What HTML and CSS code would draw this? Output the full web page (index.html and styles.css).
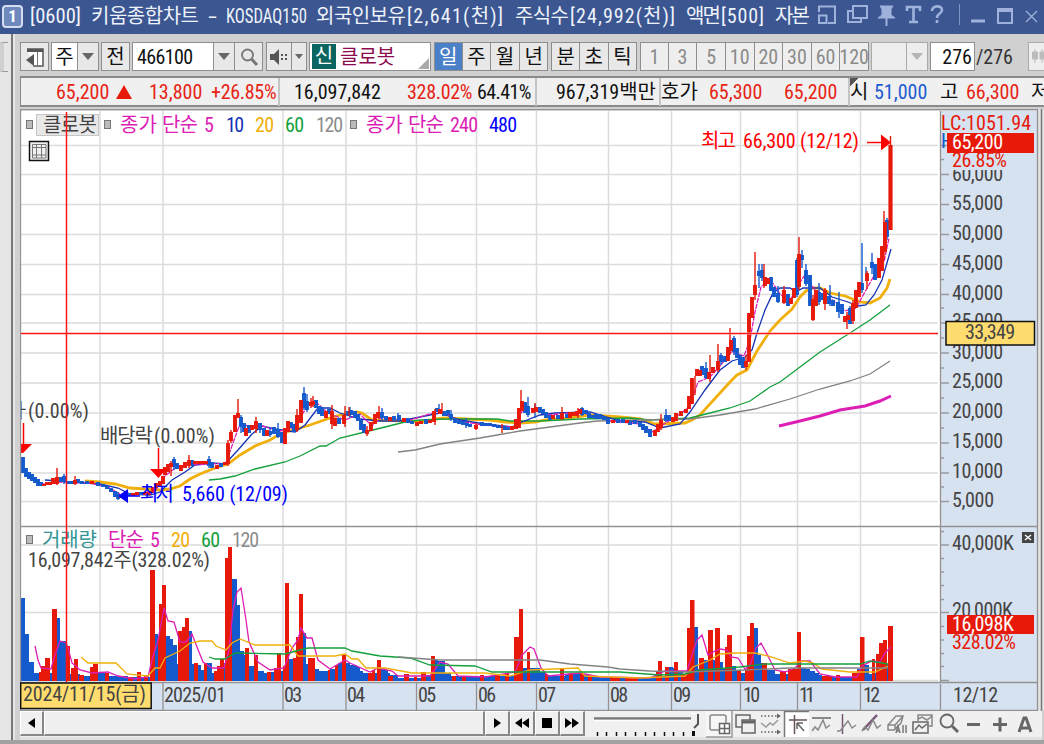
FILE: index.html
```
<!DOCTYPE html>
<html lang="ko">
<head>
    <meta charset="UTF-8">
    <meta name="viewport" content="width=device-width, initial-scale=1.0">
    <title>키움종합차트</title>
    <link rel="stylesheet" href="styles.css">
</head>
<body>

<header class="titlebar">
    <span class="win-no">1</span>
    <svg class="title" width="786" height="34">
        <text x="5" y="23" textLength="51" lengthAdjust="spacingAndGlyphs">[0600]</text>
        <text x="66" y="23" textLength="108">키움종합차트</text>
        <text x="183" y="23" textLength="9" lengthAdjust="spacingAndGlyphs">-</text>
        <text x="201" y="23" textLength="81" lengthAdjust="spacingAndGlyphs">KOSDAQ150</text>
        <text x="291" y="23" textLength="90">외국인보유</text>
        <text x="382" y="23" textLength="96">[2,641(천)]</text>
        <text x="490" y="23" textLength="54">주식수</text>
        <text x="545" y="23" textLength="105">[24,992(천)]</text>
        <text x="661" y="23" textLength="35">액면</text>
        <text x="696" y="23" textLength="43">[500]</text>
        <text x="750" y="23" textLength="35">자본</text>
    </svg>
    <svg class="win-icons" width="232" height="34" fill="none" stroke="#9fb2dc" stroke-width="2">
        <path d="M8 12V6.500H24V23H17M8 15.500H15.500V23H8Z"/>
        <path d="M42 11H37V22H50V19M42 6H56V18H42Z"/>
        <path d="M69 6H82L80 9V15L84 18H67L71 15V9Z" fill="#9fb2dc" stroke-width="1"/>
        <path d="M75.500 18V26"/>
        <path d="M96 11V7H109V11M102.500 7V22M98 22H107" stroke-width="2.600"/>
        <path d="M121 11C121 5 131 5 131 10C131 14 126 13 126 18M126 20V23" stroke-width="2.600"/>
        <path d="M148.500 4V25" stroke="#7f93c4" stroke-width="1"/>
        <path d="M160 21H174" stroke-width="3"/>
        <path d="M187 9H201V23H187ZM187 11H201"/>
        <path d="M215 11L226 22M226 11L215 22" stroke-width="1.300"/>
    </svg>
</header>

<div class="workspace">
    <aside class="dock"><i class="dock-tab"></i></aside>
    <main class="panel">

        <div class="toolbar">
            <span class="btn w29">
                <svg width="20" height="20"><path d="M2 2H18V19H8" fill="#fff" stroke="#555" stroke-width="1.500"/><path d="M2 3.500H18" stroke="#555" stroke-width="3"/><path d="M12.500 5V19" stroke="#777"/><path d="M9 7V19L1 13Z" fill="#555"/></svg>
            </span>
            <span class="group ml2">
                <span class="btn white w27">주</span><span class="btn w21"><i class="down"></i></span>
            </span>
            <span class="btn w29 ml2">전</span>
            <span class="group ml2">
                <span class="btn white code">466100</span>
                <span class="btn w21"><i class="down"></i></span>
                <span class="btn w28"><svg width="20" height="20" fill="none" stroke="#777" stroke-width="1.800"><circle cx="8.500" cy="8" r="5.500"/><path d="M12.500 12L18 18" stroke-width="3"/></svg></span>
            </span>
            <span class="group ml3">
                <span class="btn w26"><svg width="20" height="20" fill="#555"><path d="M1 7H5L10 2V18L5 13H1Z"/><path d="M12 7h2v2h-2zM12 11h2v2h-2zM16 7h2v2h-2zM16 11h2v2h-2z"/></svg></span><span class="btn w15"><i class="down small"></i></span>
            </span>
            <span class="btn white stock ml2"><b>신</b>클로봇<i class="corner"></i></span>
            <span class="group ml3 period">
                <span class="btn on">일</span><span class="btn">주</span><span class="btn">월</span><span class="btn">년</span>
            </span>
            <span class="group ml3 period">
                <span class="btn">분</span><span class="btn">초</span><span class="btn">틱</span>
            </span>
            <span class="group ml3 minutes">
                <span class="btn">1</span><span class="btn">3</span><span class="btn">5</span><span class="btn">10</span><span class="btn">20</span><span class="btn">30</span><span class="btn">60</span><span class="btn">120</span>
            </span>
            <span class="group ml2">
                <span class="btn pale w36"></span><span class="btn pale w21"><i class="down grey"></i></span>
            </span>
            <span class="btn white count ml2">276</span>
            <span class="total">/276</span>
            <span class="btn pale last"><svg width="16" height="24" fill="#bbb" stroke="#bbb"><path d="M6 4V18M13 4V18" /><path d="M3.500 7h5v7h-5zM11 7h5v7h-5z"/></svg></span>
        </div>

        <div class="quote">
            <span></span>
            <span class="up">65,200</span>
            <span class="up"><i class="tri"></i></span>
            <span class="up">13,800</span>
            <span class="up pct">+26.85%</span>
            <span class="rule vol">16,097,842</span>
            <span class="up pct">328.02%</span>
            <span class="tight">64.41%</span>
            <span class="rule amount">967,319백만</span>
            <span class="rule">호가</span>
            <span class="up">65,300</span>
            <span class="up">65,200</span>
            <span class="rule mark">시</span>
            <span class="down-price">51,000</span>
            <span>고</span>
            <span class="up">66,300</span>
            <span>저</span>
        </div>

        <svg class="chart" width="1024" height="602" viewBox="20 109 1024 602">
            <!-- backgrounds -->
            <rect x="20" y="109" width="1024" height="602" fill="#e4e4e4"/>
            <rect x="21" y="111" width="919" height="571" fill="#fff"/>
            <rect x="940" y="111" width="98" height="572" fill="#d7e2f0"/>
            <rect x="21" y="683" width="1017" height="28" fill="#d7e2f0"/>

            <!-- grid -->
            <path class="grid" d="M100 111V682M163 111V682M283 111V682M346 111V682M416.500 111V682M476.500 111V682M536.500 111V682M608.500 111V682M671.500 111V682M740.500 111V682M797.500 111V682M860.500 111V682"/>
            <path class="grid" d="M21 145.500H938M21 174.500H938M21 204.500H938M21 234.500H938M21 264.500H938M21 294.500H938M21 323H938M21 353H938M21 383H938M21 413H938M21 443H938M21 473H938M21 501.500H938M21 545H938M21 612.500H938M21 680.500H938"/>

            <!-- volume bars -->
            <path class="blue" d="M21 681V598H25V634H29V662H34V673H57V618H60V641H67V674H69V674H80V676H98V673H105V676H128V677H155V634H158V640H166V636H170V639H173V645H177V664H189V631H192V664H198V665H201V670H207V663H212V673H222V663H232V579H237V605H240V651H244V655H248V666H258V671H264V673H271V672H281V671H289V659H296V660H303V633H306V664H315V669H319V671H330V669H335V666H338V663H350V665H357V667H360V671H363V673H381V668H385V670H388V673H390V675H398V678H409V678H426V675H431V673H435V660H438V661H445V673H451V676H500V676H523V668H540V672H545V675H551V676H565V674H585V675H590V676H600V678H655V676H665V671H669V667H673V668H678V671H683V675H694V627H698V669H704V660H715V661H719V662H723V669H732V666H736V670H740V673H745V669H754V628H758V655H761V663H767V670H775V674H795V670H801V668H806V669H810V671H815V673H819V675H822V676H830V677H857V669H864V665H869V674H872V673H879V670H886V664H889V681Z"/>
            <path class="red" d="M39 672H41V666H45V658H50V681H39ZM52 609H57V681H52ZM66 646H70V681H66ZM71 668H74V659H78V681H71ZM79 675H84V681H79ZM90 667H93V664H98V681H90ZM105 673H109V681H105ZM128 677H133V681H128ZM137 672H141V681H137ZM144 676H148V681H144ZM150 570H155V681H150ZM158 637H159V604H162V585H166V681H158ZM178 631H182V627H185V618H189V681H178ZM194 663H198V681H194ZM204 663H207V681H204ZM214 671H217V666H220V659H224V681H214ZM225 558H228V547H232V681H225ZM245 648H249V681H245ZM254 655H258V681H254ZM267 672H271V681H267ZM274 668H277V653H281V681H274ZM283 666H285V583H289V681H283ZM293 658H296V637H299V594H303V681H293ZM308 658H315V681H308ZM328 670H330V681H328ZM335 665H338V681H335ZM342 655H346V681H342ZM368 673H372V670H375V681H368ZM377 660H381V681H377ZM388 676H393V681H388ZM404 674H409V681H404ZM414 677H417V681H414ZM421 672H426V681H421ZM431 656H435V681H431ZM452 676H456V681H452ZM462 677H466V681H462ZM480 675H484V681H480ZM495 674H500V681H495ZM505 673H509V681H505ZM514 637H519V609H523V681H514ZM527 652H530V681H527ZM545 674H548V681H545ZM560 668H564V681H560ZM569 673H573V681H569ZM580 673H584V681H580ZM588 675H592V681H588ZM610 678H620V681H610ZM625 678H638V681H625ZM656 672H658V661H662V681H656ZM665 667H669V681H665ZM674 662H678V681H674ZM681 674H687V628H690V600H694.500V681H681ZM699 658H704V681H699ZM708 630H713V681H708ZM715 628H720V681H715ZM725 647H727V635H732V681H725ZM737 671H741V681H737ZM745 669H747V636H750V623H754V681H745ZM762 663H767V681H762ZM780 671H786V681H780ZM788 669H797V632H801V681H788ZM822 676H832V681H822ZM836 675H840V681H836ZM852 673H857V670H860V637H864.500V681H852ZM872 659H875V681H872ZM876 654H879V643H883V640H887V681H876ZM888 626H893V681H888Z"/>

            <!-- volume averages -->
            <path class="ma5" d="M35 646L38 660L41 668L51 669L55 655L60 641L66 643L68 648L72 663L80 670L92 673L108 672L118 676L135 679L148 677L152 660L158 640L164 608L168 621L174 622L180 642L186 642L192 634L197 647L203 662L212 668L224 668L229 650L233 610L237 592L241 588L246 620L249 642L258 662L270 670L284 668L292 648L298 640L301 628L307 638L312 638L318 660L330 669L345 660L350 663L370 672L378 668L392 671L398 676L430 676L440 662L448 664L458 676L485 677L515 672L522 655L530 647L534 649L541 668L548 676L580 673L600 677L650 678L665 671L687 671L692 655L697 640L702 635L708 655L715 651L720 649L727 650L731 657L738 658L745 669L750 665L756 648L761 643L768 656L775 670L785 672L795 668L802 661H810L820 674L835 677H857L862 666L872 661L880 662L885 653L891 647"/>
            <path class="ma20" d="M81 657L88 663H116L127 674L148 676L155 668H160L165 658L180 651L190 643L200 641H212L216 646L226 650L232 643L240 639L255 645H290L298 656H335L345 654L352 659H358L366 668H385L412 673H485L510 676L530 670L578 668L585 676L640 678L685 676L693 667L710 660L720 654L735 653H755L768 656L790 663L805 661L813 663L822 669L850 672H875L888 666"/>
            <path class="ma60" d="M209 657L215 659H225L235 653L285 654L300 650L308 648H345L352 651L380 656L410 658L430 665L475 666L492 672H620L660 675L685 674L700 670L740 667L765 664H860L870 661L888 664"/>
            <path class="ma120" d="M398 657L440 660H540L570 664L608 667L620 669L650 671L685 672L745 670L790 668H888"/>

            <!-- price averages -->
            <path class="ma20 thick" d="M85 481L100 482L115 484L130 488L145 489L160 490L170 489L180 486L190 479L200 474L215 468L228 464L240 455L255 446L270 440L280 434L300 428L310 425L330 418L340 415L357 412L362 413L372 420L410 421L425 422L435 419L445 418L465 419L490 420L505 422L520 423L535 422L545 420L560 419L590 415L620 417L640 419L655 424L685 423L692 420L700 415L730 382L737 375L747 370L757 351L770 331L780 320L792 309L800 297L806 291L813 288H820L830 293L845 296L860 302L870 303L880 298L887 288L890 279"/>
            <path class="ma60" d="M209 480L220 479L235 476L255 469L285 462L300 456L320 446H326L340 438L365 432L385 427L405 422L420 420L445 419H497L510 421H540L580 419L630 418L650 420L690 418L710 413L730 408L750 401L770 387L780 382L800 367L820 352L850 333L870 320L890 305"/>
            <path class="ma120" d="M398 452L415 450L440 444L480 438L520 431L550 427L580 423L597 421L640 420L690 419L720 415L755 409L790 399L820 389L850 381L870 374L890 361"/>
            <path class="ma240" d="M779 426L800 421L820 416L840 410L865 406L880 401L891 396"/>
            <path class="ma10" d="M45 480L70 482L100 484L118 488L130 494L150 495L160 492L172 480L185 472L195 465L212 463L225 464L238 450L252 434L262 426L275 429L295 432L305 425L318 408H330L340 413L360 419L380 421H400L440 413L460 420L485 424L512 427L522 422L540 415L555 413L590 412L620 421L645 422L660 428L680 424L690 412L705 390L720 370L732 361L745 357L752 350L757 333L765 310L773 293L780 288H790L796 292L803 288H820L832 297L848 302L858 306L866 305L874 295L882 280L891 249"/>
            <path class="ma5 dash" d="M30 476L42 484L60 482L90 483L108 487L120 494L135 495L155 491L165 476L178 466L190 465L212 464L226 463L234 440L240 424L248 426L262 426L280 431L292 428L300 418L308 405L318 404L328 413L345 420L360 414L372 426L380 418L410 420L440 411L460 421L482 425L515 427L522 411L530 408L548 415L580 412L610 421L640 424L652 432L664 424L680 414L690 406L698 382L710 377L720 366L731 352L744 356L750 340L755 312L761 287L770 279L780 294L790 301L798 285L805 275L815 290L830 298L845 311L856 308L866 290L876 272L884 262L889 238"/>

            <!-- candles: bodies and wicks -->
            <path class="body blue-line" d="M23 457V473M26 468V477M29 472V479M32 474V481M35 477V483M38 479V486M41 482V486M61 477V482M64 476V482M69 481V484M72 481V484M78 479V483M82 481V484M87 481V484M98 482V486M103 484V487M107 486V489M111 488V492M115 491V497M118 494V499M129 493V496M141 492V495M174 459V467M177 463V469M192 460V466M209 459V466M212 462V468M221 463V467M241 417V427M244 423V432M249 425V433M260 423V430M264 428V436M270 431V435M274 427V434M278 429V437M282 432V443M291 422V428M294 424V432M304 393V408M307 401V410M316 400V408M319 406V414M322 407V416M329 409V414M339 418V424M348 411V415M351 410V415M355 411V418M358 414V421M361 420V430M364 424V433M382 412V418M386 416V420M394 416V420M399 415V420M408 418V423M412 421V424M426 419V424M437 408V412M444 411V416M448 410V415M451 414V419M455 418V423M459 420V424M463 421V425M467 423V426M470 424V427M482 422V426M486 423V426M490 423V426M494 424V427M498 425V428M502 426V428M505 426V430M508 427V430M525 402V413M528 406V415M540 407V413M543 409V414M546 412V418M550 415V420M558 415V419M567 414V418M582 408V415M586 410V414M589 413V418M592 415V418M596 414V419M600 414V419M604 416V420M608 418V424M618 419V423M623 419V423M630 421V425M635 420V424M640 422V427M643 424V430M646 426V433M650 429V437M666 415V421M669 415V421M702 366V375M706 368V378M721 355V362M725 356V362M734 338V352M737 348V358M740 355V365M743 358V368M759 271V276M762 270V278M771 277V291M774 287V297M778 293V302M788 294V306M797 260V295M802 255V260M806 270V284M810 275V306M819 292V302M823 293V300M829 296V304M833 300V306M838 302V312M842 304V314M850 308V324M862 283V290M872 262V268M875 264V280M887 220V237"/>
            <path class="wick blue-line" d="M64 474V484M118 492V500M174 457V470M209 456V468M241 415V433M260 423V433M278 423V438M270 427V437M304 387V410M307 394V412M350 407V418M382 408V420M398 413V421M439 404V414M451 410V421M466 418V428M528 397V417M535 404V418M582 407V416M666 409V422M706 362V379M721 353V365M734 336V355M759 264V288M762 264V281M778 286V303M797 258V297M802 250V268M806 264V286M819 283V305M830 285V306M839 292V318M850 306V324M862 243V293M872 253V274M866 267V277M887 218V240"/>
            <path class="body red-line" d="M44 484V486M47 482V485M50 482V485M53 478V484M57 477V484M75 480V484M92 481V484M121 495V498M125 493V496M133 493V496M137 492V495M145 492V495M149 491V495M153 487V493M156 483V488M160 481V486M163 476V484M165 467V475M168 464V472M171 463V467M181 465V471M185 462V468M189 460V466M195 461V464M199 461V464M203 461V464M206 461V464M217 465V469M225 462V465M228 443V464M231 432V441M235 415V432M238 413V418M246 428V436M252 425V430M256 421V429M267 430V436M285 428V444M288 421V432M297 415V430M301 400V423M311 402V406M313 401V405M326 411V418M332 411V424M335 418V426M344 415V424M367 430V434M371 422V431M375 414V424M378 412V418M390 417V421M404 418V422M417 422V426M421 421V424M430 420V423M434 411V422M440 409V414M476 425V429M512 426V430M516 419V429M519 408V428M522 401V411M533 408V413M536 407V412M553 415V419M562 413V419M570 412V418M573 412V416M577 411V416M580 409V414M613 420V423M627 420V423M655 430V436M658 424V432M661 420V428M673 417V422M676 413V421M681 411V416M686 409V413M689 396V409M692 378V404M697 369V376M700 370V376M709 372V379M713 367V373M718 361V370M728 347V361M731 340V351M746 361V367M749 313V362M752 297V318M755 285V295M765 277V286M768 278V284M784 290V303M791 298V304M794 288V298M799 254V287M813 299V320M816 290V306M825 290V304M845 316V322M848 315V320M853 303V321M856 290V308M859 282V297M867 273V281M879 258V278M882 246V271M885 222V252"/>
            <path class="wick red-line" d="M57 468V485M75 476V485M171 461V476M189 455V468M228 440V466M231 430V443M238 399V416M256 417V433M297 409V432M313 396V407M311 398V408M332 405V429M345 406V427M349 407V416M367 426V436M379 406V419M435 409V425M442 403V414M476 423V430M502 424V433M521 390V411M535 403V412M562 407V420M578 408V418M661 414V430M695 376V395M710 355V382M718 344V372M730 328V355M746 355V370M755 252V300M764 264V288M784 286V304M799 237V290M813 295V321M825 288V310M847 312V329M853 300V324M867 271V289M884 211V260"/>
            <path class="red-line" stroke-width="4.200" d="M890.500 145V230"/>
            <path class="wick red-line" d="M890.500 136V146"/>

            <!-- chart labels -->
            <rect x="36.500" y="114.500" width="62" height="21" fill="#e8e8e8" stroke="#c6c6c6"/>
            <g fill="#bbb" stroke="#777"><rect x="26.500" y="120.500" width="6" height="8"/><rect x="104.500" y="120.500" width="6" height="8"/><rect x="350.500" y="120.500" width="6" height="8"/><rect x="26.500" y="535.500" width="6" height="8"/></g>
            <text x="43" y="132" textLength="54" fill="#444">클로봇</text>
            <g fill="#dc1eb4">
                <text x="120" y="132" textLength="37">종가</text><text x="162" y="132" textLength="36">단순</text><text x="204" y="132">5</text>
                <text x="366" y="132" textLength="37">종가</text><text x="408" y="132" textLength="36">단순</text><text x="450" y="132" textLength="28">240</text>
                <text x="108" y="547" textLength="36">단순</text><text x="150" y="547">5</text>
            </g>
            <text x="226" y="132" textLength="18" fill="#1432b4">10</text>
            <text x="255" y="132" textLength="19" fill="#f0af0a">20</text>
            <text x="285" y="132" textLength="19" fill="#14a03c">60</text>
            <text x="316" y="132" textLength="27" fill="#8c8c8c">120</text>
            <text x="489" y="132" textLength="28" fill="#00f">480</text>
            <text x="42" y="547" textLength="55" fill="#329696">거래량</text>
            <text x="171" y="547" textLength="19" fill="#f0af0a">20</text>
            <text x="201" y="547" textLength="19" fill="#14a03c">60</text>
            <text x="232" y="547" textLength="27" fill="#8c8c8c">120</text>
            <text x="28" y="567" textLength="182" fill="#444">16,097,842주(328.02%)</text>

            <rect x="29.500" y="141.500" width="19" height="19" fill="#f0f0f0" stroke="#111" stroke-width="1.500"/>
            <path d="M32.500 144.500H46V158H32.500ZM32.500 147.500H46M32.500 155H46M36.500 144V158M41.500 144V158" fill="none" stroke="#777"/>

            <g fill="#444">
                <text x="12" y="418">ㅏ</text>
                <text x="28" y="418" textLength="61">(0.00%)</text>
                <text x="100" y="443" textLength="53">배당락</text><text x="154" y="443" textLength="61">(0.00%)</text>
            </g>
            <path d="M23.500 423V445M158.500 448V470" stroke="#f00" stroke-width="1.500"/>
            <path d="M21 444H32L23 453H21ZM150 469H166L158.500 478Z" fill="#f00"/>
            <path d="M118 496L128 489V503Z" fill="#00f"/>
            <path d="M126 496H140" stroke="#00f" stroke-width="1.500"/>
            <g fill="#00f"><text x="140" y="501" textLength="34">최저</text><text x="182" y="501" textLength="106">5,660 (12/09)</text></g>
            <g fill="#f00"><text x="701" y="148" textLength="35">최고</text><text x="743" y="148" textLength="116">66,300 (12/12)</text></g>
            <path d="M867 142.500H883" stroke="#f00" stroke-width="1.500"/>
            <path d="M881 134.500L891 142.500L881 150.500Z" fill="#f00"/>

            <!-- frames -->
            <path class="frame" d="M20 109.500H1038M20.500 109V711M940.500 111V682M1037.500 109V711M20 526.500H1037M20 682.500H1037M20 710.500H1037M163 683V710M283 683V710M346 683V710M416.500 683V710M476.500 683V710M536.500 683V710M608.500 683V710M671.500 683V710M740.500 683V710M797.500 683V710M860.500 683V710M940.500 684V710"/>
            <path d="M1041.500 109V711" stroke="#777" stroke-width="1.500"/>
            <path class="tick" d="M941 145.500H949M941 174.500H949M941 204.500H949M941 234.500H949M941 264.500H949M941 294.500H949M941 323H949M941 353H949M941 383H949M941 413H949M941 443H949M941 473H949M941 501.500H949M941 545H949M941 612.500H949M941 680.500H949M941 159.500H944M941 189.500H944M941 219.500H944M941 249.500H944M941 279.500H944M941 308H944M941 338H944M941 368H944M941 398H944M941 428H944M941 458H944M941 487H944M941 531.500H944M941 558.500H944M941 572H944M941 585.500H944M941 599.500H944M941 626.500H944M941 640H944M941 653.500H944M941 666.500H944"/>

            <!-- scales -->
            <g fill="#444">
                <text x="952" y="181" textLength="51">60,000</text>
                <text x="952" y="210" textLength="51">55,000</text>
                <text x="952" y="240" textLength="51">50,000</text>
                <text x="952" y="270" textLength="51">45,000</text>
                <text x="952" y="300" textLength="51">40,000</text>
                <text x="952" y="328" textLength="51">35,000</text>
                <text x="952" y="359" textLength="51">30,000</text>
                <text x="952" y="388" textLength="51">25,000</text>
                <text x="952" y="418" textLength="51">20,000</text>
                <text x="952" y="448" textLength="51">15,000</text>
                <text x="952" y="478" textLength="51">10,000</text>
                <text x="952" y="507" textLength="42">5,000</text>
                <text x="952" y="550" textLength="62">40,000K</text>
                <text x="952" y="617" textLength="61">20,000K</text>
                <text x="164" y="702" textLength="62">2025/01</text>
                <text x="284" y="702" textLength="18">03</text>
                <text x="347" y="702" textLength="18">04</text>
                <text x="418" y="702" textLength="18">05</text>
                <text x="478" y="702" textLength="18">06</text>
                <text x="538" y="702" textLength="18">07</text>
                <text x="610" y="702" textLength="18">08</text>
                <text x="673" y="702" textLength="18">09</text>
                <text x="743" y="702" textLength="17">10</text>
                <text x="799" y="702" textLength="16">11</text>
                <text x="863" y="702" textLength="17">12</text>
                <text x="953" y="702" textLength="45">12/12</text>
            </g>
            <rect x="950" y="152" width="75" height="18" fill="#d7e2f0"/>
            <text x="941" y="130" textLength="90" fill="#e6190a">LC:1051.94</text>
            <text x="941" y="148" fill="#145acd">H</text>
            <text x="952" y="167" textLength="55" fill="#e6190a">26.85%</text>
            <rect x="947" y="133" width="87" height="20" fill="#e6190a"/>
            <text x="952" y="149" textLength="51" fill="#fff">65,200</text>
            <rect x="947" y="615" width="87" height="19" fill="#e6190a"/>
            <text x="952" y="631" textLength="62" fill="#fff">16,098K</text>
            <text x="952" y="649" textLength="64" fill="#e6190a">328.02%</text>
            <rect x="1022" y="532" width="12" height="11" fill="#444"/>
            <path d="M1025 535L1031 540M1031 535L1025 540" stroke="#fff" stroke-width="1.300"/>

            <!-- crosshair -->
            <path d="M21 333.500H938" stroke="#fff" stroke-width="3" opacity=".45"/>
            <path d="M21 333.500H938M66.500 112V682" stroke="#ff1414" stroke-width="1.500"/>
            <rect x="946" y="321.500" width="88.500" height="23.500" fill="#ffdc6e" stroke="#111" stroke-width="1.500"/>
            <text x="965" y="339" textLength="50" fill="#444">33,349</text>
            <rect x="20.700" y="683" width="130.500" height="25.500" fill="#ffdc6e" stroke="#111" stroke-width="1.500"/>
            <text x="23" y="701" textLength="123" fill="#444">2024/11/15(금)</text>
        </svg>

        <footer class="bottom">
            <span class="raised w24"><i class="tl"></i></span>
            <span class="raised thumb"></span>
            <span class="raised w25"><i class="tr"></i></span>
            <span class="raised w25"><i class="tl"></i><i class="tl"></i></span>
            <span class="raised w25"><i class="stop"></i></span>
            <span class="raised w25"><i class="tr"></i><i class="tr"></i></span>
            <svg class="tools" width="458" height="27" fill="none" stroke="#666" stroke-width="1.500">
                <path d="M9 7.500H106" stroke="#777" stroke-width="2.500"/>
                <path d="M9 9.500H106" stroke="#fff"/>
                <path d="M106 2.500H112" stroke="#fff"/>
                <path d="M113 3V13L109 17" stroke="#555" stroke-width="2"/>
                <path d="M12.500 21V25M21.500 21V25M31.500 21V25M40.500 21V25M50.500 21V25M60.500 21V25M69.500 21V25M79.500 21V25M88.500 21V25M98.500 21V25" stroke="#111"/>
                <path d="M108.500 20V25" stroke="#111" stroke-width="3"/>

                <rect x="121" y="0" width="26" height="26" fill="#f6f6f6" stroke="none"/>
                <path d="M121 26H147V0" stroke="#999"/>
                <rect x="125" y="4" width="16" height="15" rx="2" stroke="#888"/>
                <rect x="134.500" y="12.500" width="10" height="10" fill="#fff"/><path d="M139.500 13V22M135 17.500H144"/>

                <path d="M157 16H151V4H165V9"/><rect x="157" y="9" width="13" height="13" fill="#f0f0f0"/><path d="M157 11H170" stroke-width="3"/>
                <path d="M176 5H193M176 21H193" stroke-dasharray="1.500 2"/><path d="M192 2.500L196 5L192 7.500ZM192 18.500L196 21L192 23.500Z" fill="#666" stroke="none"/><path d="M176 12L181 16L185 12L188 14L193 9" stroke="#999"/>

                <rect x="199" y="0" width="25" height="26" fill="#fff" stroke="none"/><path d="M199.500 26V.5H224" stroke="#777"/>
                <path d="M204 9H222M209.500 4V23" stroke="#655"/><path d="M212 12V18M212 12H218M212 12L219 20"/>

                <path d="M227 7H246" /><path d="M227 20L230 16L233 19L238 9L241 17L245 14" stroke="#888"/>
                <path d="M257.500 3V23" stroke="#757"/><path d="M252 20H255L263 10L267 17L271 14" stroke="#888"/>
                <path d="M278 19L292 4" stroke="#757" stroke-width="2.500"/><path d="M277 20L280 16L283 19L288 9L292 17L296 14" stroke="#888"/>
                <path d="M303 14L311 5H318L316 12L309 19H303ZM303 14H310L318 5M310 14V19" stroke="#888"/><path d="M311 22L313 15L315 22M312 20H315M318 14V22M321 14V22" stroke="#777"/>
                <path d="M333 10V4H347V15H344M333 8L337 6L342 9L347 5" stroke="#888"/><rect x="328" y="11" width="15" height="11" fill="#f0f0f0"/><path d="M330 19L334 14L337 17L342 13"/>
                <circle cx="362" cy="10" r="6.500" stroke-width="1.800"/><path d="M367 15L373 21" stroke-width="3"/>
                <path d="M382 13.500H395" stroke-width="3"/>
                <path d="M408 13.500H422M415 6.500V20.500" stroke-width="3"/>
                <path d="M434 21L439 7H441L446 21M436 17H444" stroke-width="3"/>
            </svg>
        </footer>
    </main>
</div>

</body>
</html>
```
FILE: styles.css
```
* {
    box-sizing: border-box;
}

body {
    margin: 0;
    width: 1044px;
    height: 744px;
    overflow: hidden;
    background: #a2a2a2;
    color: #111;
    font-family: "Roboto Condensed", "Noto Sans CJK KR", sans-serif;
    font-size: 20px;
    font-weight: 400;
    line-height: 1;
}

svg {
    display: block;
    flex: none;
}

svg text {
    stroke: none;
    white-space: pre;
}

/* title bar */
.titlebar {
    display: flex;
    height: 34px;
    padding-left: 2px;
    background: #3b5691;
}

.win-no {
    width: 21px;
    height: 23px;
    margin: 5px 2px 0 0;
    border: 2px solid #d5def0;
    border-radius: 4px;
    background: #6f88bd;
    color: #fff;
    font-size: 17px;
    font-weight: 700;
    line-height: 19px;
    text-align: center;
}

.title {
    fill: #eef2fa;
}

/* left dock and main panel */
.workspace {
    display: flex;
    height: 706px;
    background: #d0d0d0;
}

.dock {
    width: 13px;
    padding-top: 8px;
    border-right: 2px solid #777;
    background: #e6e6e6;
}

.dock-tab {
    display: block;
    width: 8px;
    height: 30px;
    border: 1px solid #999;
    border-right: 0;
    border-left: 4px solid #d0d0d0;
}

.panel {
    display: flex;
    flex: 1;
    flex-direction: column;
    width: 1031px;
    overflow: hidden;
    border-left: 2px solid #e6e6e6;
    padding: 8px 0 0 5px;
}

/* toolbar */
.toolbar {
    display: flex;
    height: 29px;
}

.group {
    display: flex;
    flex: none;
}

.btn {
    display: flex;
    flex: none;
    align-items: center;
    justify-content: center;
    height: 29px;
    border: 1px solid #8e8e8e;
    background: #e8e8e8;
}

.group .btn + .btn {
    border-left: 0;
}

.white { background: #fff; }
.pale { background: #eee; border-color: #aaa; }
.ml2 { margin-left: 2px; }
.ml3 { margin-left: 3px; }
.w15 { width: 15px; }
.w21 { width: 21px; }
.w24 { width: 24px; }
.w25 { width: 25px; }
.w26 { width: 26px; }
.w27 { width: 27px; }
.w28 { width: 28px; }
.w29 { width: 29px; }
.w36 { width: 36px; }

.code {
    width: 82px;
    justify-content: flex-start;
    padding-left: 4px;
    letter-spacing: -.6px;
}

.down {
    border: 6px solid transparent;
    border-top: 7px solid #666;
    border-bottom: 0;
}

.down.small { border-width: 5px 4px 0; }
.down.grey { border-top-color: #b5b5b5; }

.stock {
    width: 122px;
    justify-content: flex-start;
    padding-left: 2px;
    color: #8c0a50;
}

.stock b {
    width: 24px;
    margin-right: 4px;
    background: #0a6460;
    color: #fff;
    font-weight: 400;
    line-height: 25px;
    text-align: center;
}

.corner {
    align-self: flex-end;
    margin: 0 1px 1px auto;
    border-left: 11px solid transparent;
    border-bottom: 11px solid #aaa;
}

.period .btn { width: 28.600px; }
.period .on { background: #4a80c8; color: #fff; }

.minutes .btn {
    width: 28.600px;
    background: #eee;
    color: #8a8a8a;
}

.count {
    width: 45px;
    justify-content: flex-end;
    padding-right: 2px;
}

.total {
    flex: none;
    width: 51px;
    padding: 5px 0 0 1px;
    color: #333;
}

.last {
    width: 30px;
    margin-left: 2px;
    justify-content: flex-start;
}

/* quote row */
.quote {
    display: grid;
    grid-template-columns: 35px 60px 33px 62px 62px 134px 70px 58px 124px 50px 75px 64px 26px 66px 26px 65px 40px;
    flex: none;
    height: 31px;
    margin-top: 5px;
    border: 2px solid #8a8a8a;
    border-width: 2px 0 2px 1px;
    background: #f0f0f0;
    line-height: 28px;
    white-space: nowrap;
}

.up { color: #e62314; }
.down-price { color: #1e5ad2; }
.pct { letter-spacing: -.3px; }
.tight { letter-spacing: -.6px; }
.vol { margin-left: 5px; padding-left: 14px; }

.rule {
    border-left: 2px solid #c4c4c4;
}

.amount { padding-left: 19px; }

.mark {
    background: linear-gradient(135deg, #555 6px, transparent 6px);
}

.tri {
    display: inline-block;
    border: 8px solid transparent;
    border-top: 0;
    border-bottom: 14px solid #e6190a;
}

/* chart */
.chart {
    margin-top: 2px;
}

.grid { fill: none; stroke: #dcdcdc; stroke-width: 1.500; }
.frame { fill: none; stroke: #929292; stroke-width: 1.300; }
.tick { stroke: #999; stroke-width: 1.300; }
.red { fill: #e6190a; }
.blue { fill: #145acd; }
.red-line { stroke: #e6190a; }
.blue-line { stroke: #145acd; }
.body { stroke-width: 3.900; }
.wick { stroke-width: 1.400; }

.ma5, .ma10, .ma20, .ma60, .ma120, .ma240 {
    fill: none;
    stroke-width: 1.300;
}

.ma5 { stroke: #dc1eb4; }
.ma10 { stroke: #1432b4; }
.ma20 { stroke: #f0af0a; }
.ma60 { stroke: #14a03c; }
.ma120 { stroke: #828282; }
.ma240 { stroke: #dc1eb4; stroke-width: 3; }
.thick { stroke-width: 2.800; }
.dash { stroke-dasharray: 5 1; }

/* scroll bar and drawing tools */
.bottom {
    display: flex;
    height: 29px;
    width: 1022px;
    background: #f0f0f0;
    border-bottom: 3px solid #e0e0e0;
}

.raised {
    display: flex;
    flex: none;
    align-items: center;
    justify-content: center;
    height: 25px;
    border: 1px solid #fff;
    border-right: 2px solid #888;
    border-bottom: 2px solid #888;
    background: #f0f0f0;
}

.thumb { width: 441px; }

.tl, .tr {
    border: 5px solid transparent;
}

.tl { border-left: 0; border-right: 7px solid #000; }
.tr { border-right: 0; border-left: 7px solid #000; }

.stop {
    width: 10px;
    height: 10px;
    background: #000;
}
```
